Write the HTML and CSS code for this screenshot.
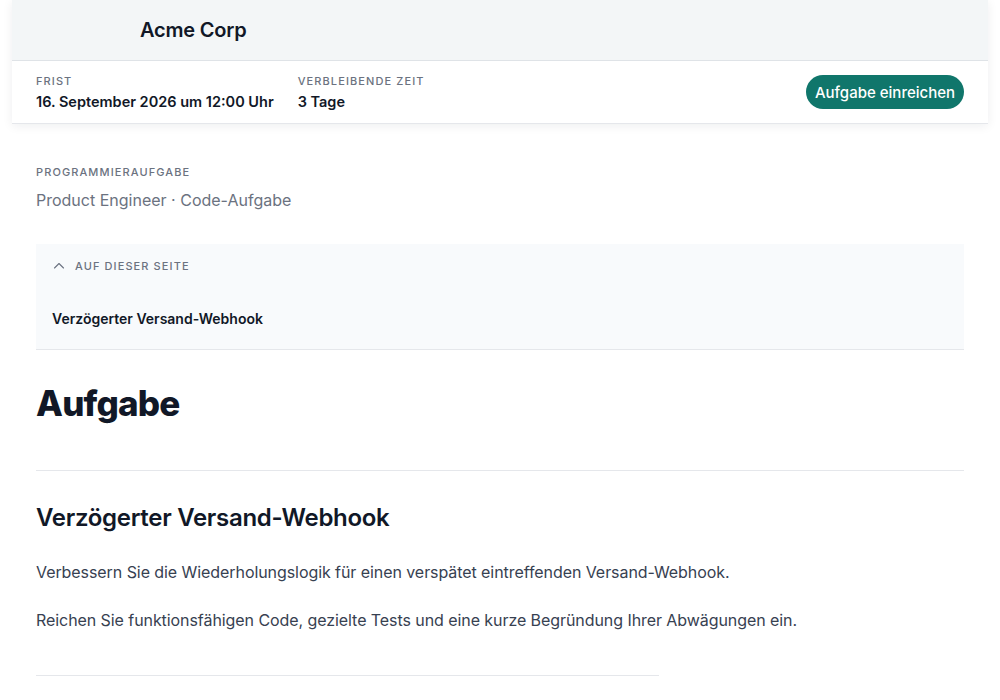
FILE: index.html
```html
<!DOCTYPE html>
<html lang="de">
<head>
<meta charset="utf-8">
<title>Aufgabe – Acme Corp</title>
<link rel="stylesheet" href="styles.css">
</head>
<body>
<div class="page">
  <header class="header">
    <div class="brand">
      <span class="logo-space"></span>
      <span class="brand-name">Acme Corp</span>
    </div>
    <div class="infobar">
      <div class="meta">
        <div class="meta-item">
          <div class="label">Frist</div>
          <div class="value">16. September 2026 um 12:00 Uhr</div>
        </div>
        <div class="meta-item">
          <div class="label">Verbleibende Zeit</div>
          <div class="value">3 Tage</div>
        </div>
      </div>
      <button class="submit">Aufgabe einreichen</button>
    </div>
  </header>
  <main class="main">
    <div class="eyebrow">Programmieraufgabe</div>
    <div class="subtitle">Product Engineer · Code-Aufgabe</div>
    <nav class="toc">
      <div class="toc-head">
        <svg class="chev" width="12" height="12" viewBox="0 0 12 12"><path d="M1.5 8 L6 3.5 L10.5 8" fill="none" stroke="currentColor" stroke-width="1.1" stroke-linecap="round" stroke-linejoin="round"/></svg>
        <span>Auf dieser Seite</span>
      </div>
      <div class="toc-item">Verzögerter Versand-Webhook</div>
    </nav>
    <h1 class="title">Aufgabe</h1>
    <hr class="rule">
    <h2 class="section-title">Verzögerter Versand-Webhook</h2>
    <p class="text">Verbessern Sie die Wiederholungslogik für einen verspätet eintreffenden Versand-Webhook.</p>
    <p class="text">Reichen Sie funktionsfähigen Code, gezielte Tests und eine kurze Begründung Ihrer Abwägungen ein.</p>
    <hr class="rule short">
  </main>
</div>
</body>
</html>
```
FILE: styles.css
```css
* { box-sizing: border-box; }
html, body { margin: 0; padding: 0; background: #ffffff; }
body {
  font-family: Inter, "Noto Sans", "Liberation Sans", sans-serif;
  color: #111827;
}
.page {
  width: 976px;
  margin: 0 auto;
}
.header {
  background: #ffffff;
  box-shadow: 0 2px 10px rgba(15, 23, 42, 0.07);
}
.brand {
  height: 61px;
  background: #f3f6f7;
  border-bottom: 1px solid #dfe3e7;
  display: flex;
  align-items: center;
  gap: 12px;
  padding: 0 24px;
}
.logo-space { width: 92px; height: 32px; }
.brand-name {
  font-size: 20px;
  font-weight: 600;
  letter-spacing: -0.2px;
  color: #111827;
}
.infobar {
  height: 63px;
  display: flex;
  align-items: center;
  justify-content: space-between;
  padding: 0 24px;
  border-bottom: 1px solid #e5e7eb;
}
.meta { display: flex; gap: 24px; }
.label {
  font-size: 11px;
  line-height: 16px;
  letter-spacing: 0.1em;
  text-transform: uppercase;
  color: #6b7280;
  font-weight: 500;
}
.value {
  font-size: 14.5px;
  line-height: 20px;
  font-weight: 600;
  color: #111827;
  margin-top: 3px;
}
.submit {
  font-family: inherit;
  font-size: 15px;
  font-weight: 500;
  color: #ffffff;
  background: #10766b;
  border: none;
  border-radius: 999px;
  height: 34px;
  padding: 0 9px;
  cursor: pointer;
}
.main { padding: 40px 24px 0; }
.eyebrow {
  font-size: 11px;
  line-height: 16px;
  letter-spacing: 0.1em;
  text-transform: uppercase;
  color: #6b7280;
  font-weight: 500;
}
.subtitle {
  margin-top: 8px;
  font-size: 16px;
  line-height: 24px;
  color: #6b7280;
}
.toc {
  margin-top: 32px;
  background: #f8fafc;
  border-bottom: 1px solid #e5e7eb;
  padding: 14px 16px 20px;
}
.toc-head {
  display: flex;
  align-items: center;
  gap: 10px;
  font-size: 11px;
  line-height: 16px;
  letter-spacing: 0.1em;
  text-transform: uppercase;
  color: #6b7280;
  font-weight: 500;
}
.chev { color: #6b7280; margin-left: 1px; }
.toc-item {
  margin-top: 35px;
  font-size: 14px;
  line-height: 20px;
  font-weight: 600;
  color: #111827;
}
.title {
  margin: 32px 0 0;
  font-size: 35px;
  line-height: 42px;
  font-weight: 800;
  letter-spacing: -0.8px;
  color: #111827;
}
.rule {
  border: none;
  border-top: 1px solid #e5e7eb;
  margin: 46px 0 0;
}
.section-title {
  margin: 31px 0 0;
  font-size: 24px;
  line-height: 32px;
  font-weight: 600;
  letter-spacing: -0.3px;
  color: #111827;
}
.text {
  margin: 24px 0 0;
  font-size: 16px;
  line-height: 28px;
  letter-spacing: -0.07px;
  color: #374151;
}
.text + .text { margin-top: 20px; }
.rule.short {
  width: 623px;
  margin-top: 41px;
}
```
